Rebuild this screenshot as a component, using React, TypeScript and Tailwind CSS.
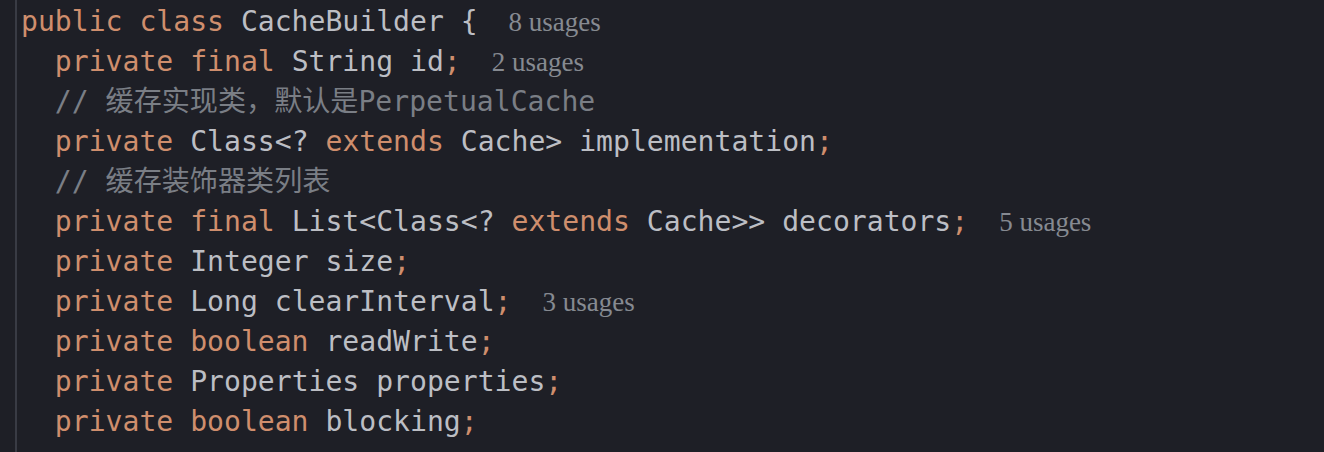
const K = ({ children }: { children: React.ReactNode }) => (
  <span className="text-[#cf8e6d]">{children}</span>
);

const Usages = ({ n }: { n: number }) => (
  <span className="ml-[14px] text-[27px] text-[#868a91] font-['Liberation_Serif',serif]">
    {n} usages
  </span>
);

const Line = ({ children, className = "" }: { children: React.ReactNode; className?: string }) => (
  <div className={"h-[40px] leading-[40px] whitespace-pre overflow-visible " + className}>{children}</div>
);

export default function App() {
  return (
    <div className="w-[1324px] h-[452px] bg-[#1e1f26] flex overflow-hidden">
      <div className="w-[15px]" />
      <div className="w-[2px] bg-[#393b44]" />
      <div className="pl-[4px] pt-[2px] text-[28.1px] text-[#bcbec4] font-['DejaVu_Sans_Mono','Noto_Sans_CJK_SC',monospace]">
        <Line>
          <K>public class</K> CacheBuilder {"{ "}
          <Usages n={8} />
        </Line>
        <Line>
          {"  "}
          <K>private final</K> String id<K>;</K> <Usages n={2} />
        </Line>
        <Line className="text-[#7a7e85]">{"  "}// 缓存实现类，默认是PerpetualCache</Line>
        <Line>
          {"  "}
          <K>private</K> Class&lt;? <K>extends</K> Cache&gt; implementation<K>;</K>
        </Line>
        <Line className="text-[#7a7e85]">{"  "}// 缓存装饰器类列表</Line>
        <Line>
          {"  "}
          <K>private final</K> List&lt;Class&lt;? <K>extends</K> Cache&gt;&gt; decorators<K>;</K>{" "}
          <Usages n={5} />
        </Line>
        <Line>
          {"  "}
          <K>private</K> Integer size<K>;</K>
        </Line>
        <Line>
          {"  "}
          <K>private</K> Long clearInterval<K>;</K> <Usages n={3} />
        </Line>
        <Line>
          {"  "}
          <K>private boolean</K> readWrite<K>;</K>
        </Line>
        <Line>
          {"  "}
          <K>private</K> Properties properties<K>;</K>
        </Line>
        <Line>
          {"  "}
          <K>private boolean</K> blocking<K>;</K>
        </Line>
      </div>
    </div>
  );
}
